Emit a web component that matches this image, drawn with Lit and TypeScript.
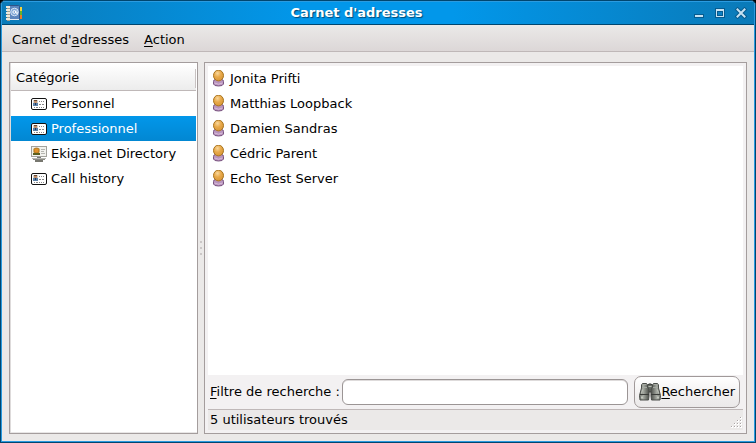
import { LitElement, html, svg, css } from "lit";
import { customElement, state } from "lit/decorators.js";

const cardIcon = html`<svg class="icon" width="16" height="16" viewBox="0 0 16 16" aria-hidden="true">
  <rect x="0.5" y="2.5" width="15" height="11" rx="1.5" fill="#fff" stroke="#111" />
  <rect x="2" y="4" width="5" height="6" fill="#d5d2cc" />
  <rect x="3" y="4" width="3" height="1" fill="#6b4a33" />
  <rect x="3" y="5" width="3" height="2" fill="#c0906c" />
  <rect x="2" y="7" width="5" height="3" fill="#5a7fa6" />
  <rect x="4" y="7" width="1" height="2" fill="#233a5a" />
  <g fill="#888"><rect x="8" y="5" width="1" height="1" /><rect x="10" y="5" width="1" height="1" /><rect x="12" y="5" width="1" height="1" />
  <rect x="8" y="8" width="2" height="1" /><rect x="11" y="8" width="2" height="1" />
  <rect x="3" y="11" width="1" height="1" /><rect x="5" y="11" width="2" height="1" /><rect x="8" y="11" width="1" height="1" /><rect x="10" y="11" width="1" height="1" /><rect x="12" y="11" width="1" height="1" /></g>
</svg>`;

const networkIcon = html`<svg class="icon" width="16" height="16" viewBox="0 0 16 16" aria-hidden="true">
  <rect x="0.5" y="0.5" width="15" height="10" fill="#f2f2ee" stroke="#a2a29c" />
  <rect x="2" y="2" width="7" height="7" fill="#e6dfb4" />
  <path d="M3 3.500Q3 2 5.500 2T8 3.500V6Q8 7 5.500 7T3 6Z" fill="#e0932a" stroke="#9a5a08" stroke-width="0.7" />
  <rect x="2" y="7" width="7" height="2" fill="#5a5f1e" />
  <path d="M10 3.500h4M10 5.500h3M10 7.500h4" stroke="#b5b5b0" />
  <path d="M6 11h4v2H6z" fill="#777" />
  <path d="M1 12.500h14" stroke="#b8b8b2" />
  <path d="M2 13.500h12" stroke="#8a8a84" />
  <path d="M4 15h8" stroke="#77776f" stroke-width="2" />
</svg>`;

const personIcon = html`<svg class="person" width="13" height="17" viewBox="0 0 13 17" aria-hidden="true">
  <defs>
    <radialGradient id="head" cx="0.4" cy="0.3" r="0.7">
      <stop offset="0" stop-color="#f9d79b" /><stop offset="0.5" stop-color="#e8a94a" /><stop offset="1" stop-color="#d9983a" />
    </radialGradient>
  </defs>
  <path d="M1.500 11.500Q1.500 9.500 3.500 9.500H9.500Q11.500 9.500 11.500 11.500V14Q11 16 6.500 16T1.500 14Z" fill="#b893bc" stroke="#7a5580" />
  <path d="M2.500 13Q6.500 15.500 10.500 13" fill="none" stroke="#d7bcda" />
  <ellipse cx="6.500" cy="5.500" rx="5" ry="5.400" fill="url(#head)" stroke="#a8741f" />
</svg>`;

const bookIcon = html`<svg class="book" width="16" height="16" viewBox="0 0 16 16" aria-hidden="true">
  <rect x="13" y="2" width="3" height="4" fill="#f3d23b" />
  <rect x="13" y="6" width="3" height="4" fill="#62b32e" />
  <rect x="13" y="10" width="3" height="4" fill="#ef7a24" />
  <rect x="2.500" y="0.500" width="11" height="14" rx="1" fill="#5d86bd" stroke="#2f5387" />
  <path d="M2 14.500h11" stroke="#e8edf3" />
  <circle cx="8.500" cy="7" r="3.800" fill="#7ea5d5" stroke="#d6e4f5" />
  <circle cx="8.300" cy="7" r="1.400" fill="none" stroke="#fff" />
  <path d="M10 5.500v2.500q1 1 2-0.500" fill="none" stroke="#fff" />
  ${[1, 4, 7, 10, 13].map((y) => svg`<rect x="0" y=${y} width="4" height="2" fill="#ece8dc" /><rect x="1" y=${y + 2} width="3" height="1" fill="#a39f8c" />`)}
</svg>`;

const tube = svg`
  <path d="M3.500 1.500H7.500L8.500 3V5L10 7V14L9.500 18H1L0.500 13.500L2.500 6V3Z" fill="url(#metal)" stroke="#4a4d49" />
  <path d="M3.500 2.500h4M3 5.500h5" stroke="#a5a9a2" />
  <path d="M1 12.500h9" stroke="#3a3c39" />
  <path d="M3.500 7.500L2.500 11.500" stroke="#c3c7be" />
  <path d="M2 14.500h2v2H2z" fill="#c4c8bf" />`;

const binocularsIcon = html`<svg class="binoculars" width="22" height="24" viewBox="1 0 22 24" aria-hidden="true">
  <defs>
    <linearGradient id="metal"><stop offset="0" stop-color="#747871" /><stop offset="0.4" stop-color="#a5a9a1" /><stop offset="1" stop-color="#4c4f4a" /></linearGradient>
  </defs>
  <path d="M9 5.500L11 4h2l2 1.500V12H9Z" fill="#666a64" stroke="#30322f" />
  <path d="M10.500 6.500h3" stroke="#b8bcb3" />
  <g transform="translate(1 2)">${tube}</g>
  <g transform="translate(23 2) scale(-1 1)">${tube}</g>
</svg>`;

@customElement("app-root")
export class AppRoot extends LitElement {
  @state() private selected = "Professionnel";

  private categories = ["Personnel", "Professionnel", "Ekiga.net Directory", "Call history"];
  private contacts = ["Jonita Prifti", "Matthias Loopback", "Damien Sandras", "Cédric Parent", "Echo Test Server"];

  static styles = css`
    :host {
      display: block;
      background: #000;
      font: 13px/16px "DejaVu Sans", sans-serif;
      color: #000;
    }
    * { box-sizing: border-box; }
    button { font: inherit; color: inherit; margin: 0; padding: 0; border: 0; background: none; text-align: left; }
    ul { list-style: none; margin: 0; padding: 0; }
    svg { display: block; flex: none; }
    .key { text-decoration: underline; text-decoration-thickness: 1px; text-underline-offset: 2px; text-decoration-skip-ink: none; }
    .window {
      display: flex;
      flex-direction: column;
      min-height: 100vh;
      border: 1px solid #00466f;
      border-radius: 5px 5px 0 0;
      background: #ebe9e8;
      overflow: hidden;
      box-shadow: inset 0 0 0 1px #2b9be0;
      padding: 1px;
    }
    .titlebar {
      display: flex;
      align-items: center;
      height: 23px;
      padding: 0 5px 0 4px;
      border-bottom: 1px solid #00466f;
      background: linear-gradient(90deg, #0a7ab8, #0297ea 40%, #0297ea 60%, #0a7ab8);
    }
    .title {
      flex: 1;
      margin: 0;
      font-size: 13px;
      font-weight: bold;
      text-align: center;
      color: #fff;
      text-shadow: 1px 1px 1px #004a78;
    }
    .controls { display: flex; gap: 5px; }
    .controls button { width: 16px; height: 16px; }
    .menubar {
      display: flex;
      gap: 15px;
      height: 27px;
      padding: 3px 10px 0;
      border-bottom: 1px solid #bfb8b8;
      background: linear-gradient(#ebe9e8, #dcd7d7);
    }
    .panes { flex: 1; display: flex; padding: 10px 7px 7px; }
    .sidebar {
      flex: 0 0 189px;
      padding: 1px;
      border: 1px solid #a49d9d;
      background: #fff;
      box-shadow: inset 1px 0 #dedbdb, inset 0 -1px #e8e6e6;
    }
    .heading {
      display: flex;
      align-items: center;
      height: 27px;
      margin: 0;
      padding: 2px 0 0 5px;
      font-size: 13px;
      font-weight: normal;
      border-bottom: 1px solid #bfb8b8;
      background: linear-gradient(#fff, #ececec);
    }
    .heading::after { content: ""; width: 1px; height: 19px; margin-left: auto; background: #c8c2c2; }
    .category { display: flex; align-items: center; gap: 4px; width: 100%; height: 25px; padding-left: 20px; }
    .category.selected { color: #fff; background: linear-gradient(#0297ea, #0287d2); }
    .handle { flex: 0 0 6px; display: flex; flex-direction: column; align-items: center; justify-content: center; gap: 4px; }
    .handle i { width: 2px; height: 2px; background: #cbc7c7; }
    .main {
      flex: 1;
      display: flex;
      flex-direction: column;
      min-width: 0;
      padding: 3px;
      border: 1px solid #a49d9d;
      background: #f3f1f2;
    }
    .contacts { flex: 1; background: #fff; }
    .contact { display: flex; align-items: center; gap: 5px; height: 25px; padding-left: 4px; }
    .search { display: flex; align-items: center; height: 34px; padding: 0 3px 0 2px; }
    .search input {
      flex: 1;
      min-width: 0;
      height: 26px;
      margin: 0 6px 0 2px;
      padding: 0 6px;
      font: inherit;
      border: 1px solid #9b9595;
      border-radius: 6px;
      background: #fff;
      box-shadow: inset 0 1px #dedbdb;
      outline: 0;
    }
    .search .find {
      display: flex;
      align-items: center;
      height: 32px;
      padding: 0 4px;
      border: 1px solid #a09999;
      border-radius: 7px;
      background: linear-gradient(#fff, #f2f0f0 60%, #ebe9e9);
    }
    .status {
      display: flex;
      justify-content: space-between;
      height: 21px;
      padding: 2px 1px 0 2px;
      border-top: 1px solid #bfb8b8;
      background: #ebe9e8;
    }
    .grip { align-self: flex-end; margin-bottom: 2px; }
  `;

  render() {
    return html`
      <div class="window">
        <header class="titlebar">
          ${bookIcon}
          <h1 class="title">Carnet d'adresses</h1>
          <div class="controls">
            <button aria-label="Réduire"><svg width="16" height="16" viewBox="0 0 16 16"><rect x="3" y="9" width="10" height="4" fill="#065b8f" /><rect x="4" y="10" width="8" height="2" fill="#c6e2f3" /></svg></button>
            <button aria-label="Agrandir"><svg width="16" height="16" viewBox="0 0 16 16"><path d="M3 3h10v10H3z" fill="#065b8f" /><path d="M4 4h8v8H4zM5 6v5h6V6z" fill="#c6e2f3" fill-rule="evenodd" /><path d="M6 7h4v3H6z" fill="#0a7fc4" /></svg></button>
            <button aria-label="Fermer"><svg width="16" height="16" viewBox="0 0 16 16"><path d="M4.500 4.500l7 7M11.500 4.500l-7 7" stroke="#065b8f" stroke-width="4" stroke-linecap="square" /><path d="M4.500 4.500l7 7M11.500 4.500l-7 7" stroke="#c6e2f3" stroke-width="2" stroke-linecap="square" /></svg></button>
          </div>
        </header>
        <nav class="menubar">
          <button>Carnet d'<span class="key">a</span>dresses</button>
          <button><span class="key">A</span>ction</button>
        </nav>
        <div class="panes">
          <aside class="sidebar">
            <h2 class="heading">Catégorie</h2>
            <ul>
              ${this.categories.map((name) => html`<li>
                <button class="category ${name === this.selected ? "selected" : ""}" @click=${() => (this.selected = name)}>
                  ${name.startsWith("Ekiga") ? networkIcon : cardIcon}<span>${name}</span>
                </button>
              </li>`)}
            </ul>
          </aside>
          <div class="handle"><i></i><i></i><i></i></div>
          <main class="main">
            <ul class="contacts">
              ${this.contacts.map((name) => html`<li class="contact">${personIcon}<span>${name}</span></li>`)}
            </ul>
            <form class="search" @submit=${(e: Event) => e.preventDefault()}>
              <label for="filter"><span class="key">F</span>iltre de recherche :</label>
              <input id="filter" type="text" />
              <button class="find">${binocularsIcon}<span><span class="key">R</span>echercher</span></button>
            </form>
            <footer class="status">
              <span>${this.contacts.length} utilisateurs trouvés</span>
              <svg class="grip" width="12" height="12" viewBox="0 0 12 12" aria-hidden="true">
                ${[0, 1, 2, 3].map((row) => Array.from({ length: row + 1 }, (_, i) => svg`<rect x=${10 - i * 3} y=${row * 3 + 1} width="2" height="2" fill="#fff" /><rect x=${10 - i * 3} y=${row * 3 + 1} width="1" height="1" fill="#aaa4a4" />`))}
              </svg>
            </footer>
          </main>
        </div>
      </div>
    `;
  }
}
